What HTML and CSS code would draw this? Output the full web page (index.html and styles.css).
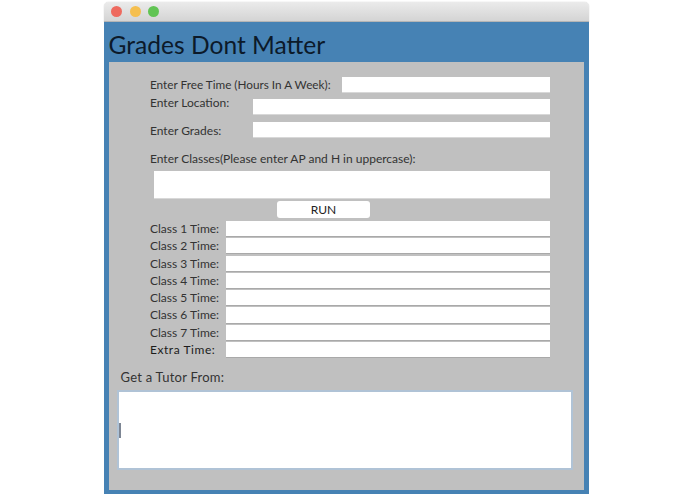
FILE: index.html
```html
<!DOCTYPE html>
<html>
    <head>
        <meta charset="UTF-8">
        <title>Grades Dont Matter</title>
        <link rel="stylesheet" href="styles.css">
    </head>
    <body>
        <div class="gdm-window">
            <div class="gdm-titlebar">
                <span class="gdm-light is-close"></span>
                <span class="gdm-light is-min"></span>
                <span class="gdm-light is-max"></span>
            </div>
            <div class="gdm-main">
                <h1 class="gdm-title">Grades Dont Matter</h1>
                <div class="gdm-panel">
                    <div class="gdm-row gdm-free">
                        <label>Enter Free Time (Hours In A Week):</label>
                        <div class="gdm-field"></div>
                    </div>
                    <div class="gdm-row gdm-location">
                        <label>Enter Location:</label>
                        <div class="gdm-field"></div>
                    </div>
                    <div class="gdm-row gdm-grades">
                        <label>Enter Grades:</label>
                        <div class="gdm-field"></div>
                    </div>
                    <div class="gdm-classes-label">Enter Classes(Please enter AP and H in uppercase):</div>
                    <div class="gdm-classes-field"></div>
                    <div class="gdm-run">RUN</div>
                    <div class="gdm-times">
                        <div class="gdm-time"><label>Class 1 Time:</label><div class="gdm-field"></div></div>
                        <div class="gdm-time"><label>Class 2 Time:</label><div class="gdm-field"></div></div>
                        <div class="gdm-time"><label>Class 3 Time:</label><div class="gdm-field"></div></div>
                        <div class="gdm-time"><label>Class 4 Time:</label><div class="gdm-field"></div></div>
                        <div class="gdm-time"><label>Class 5 Time:</label><div class="gdm-field"></div></div>
                        <div class="gdm-time"><label>Class 6 Time:</label><div class="gdm-field"></div></div>
                        <div class="gdm-time"><label>Class 7 Time:</label><div class="gdm-field"></div></div>
                        <div class="gdm-time is-extra"><label>Extra Time:</label><div class="gdm-field"></div></div>
                    </div>
                    <div class="gdm-tutor-label">Get a Tutor From:</div>
                    <div class="gdm-tutor-field"><span class="gdm-caret"></span></div>
                </div>
            </div>
        </div>
    </body>
</html>
```

FILE: styles.css
```css
* {
    padding: 0;
    margin: 0;
    box-sizing: border-box;
}

html, body {
    height: 100%;
    width: 100%;
    background-color: #fff;
    overflow: hidden;
}

body {
    font-family: "Lato", "Liberation Sans", sans-serif;
    color: #333;
}

.gdm-window {
    margin: 2px 0 0 104px;
    width: 484.5px;
    height: 492px;
    display: flex;
    flex-direction: column;
}

.gdm-titlebar {
    height: 20px;
    display: flex;
    align-items: center;
    gap: 7.5px;
    padding: 0 0 0 7px;
    background: linear-gradient(#ebebeb, #d4d4d4);
    border-radius: 5px 5px 0 0;
    border-bottom: 1px solid #b5b5b5;
    box-shadow: 0 0 1px #aaa;
}

.gdm-light {
    width: 11px;
    height: 11px;
    border-radius: 50%;
}

.is-close { background-color: #ee6a5f; }
.is-min { background-color: #f5bf4f; }
.is-max { background-color: #61c454; }

.gdm-main {
    flex: 1;
    background-color: #4682b4;
    padding: 0 4.5px 4px 4.5px;
    display: flex;
    flex-direction: column;
}

.gdm-title {
    height: 40px;
    font-size: 24.6px;
    font-weight: 400;
    line-height: 45px;
    color: #0c1a2a;
}

.gdm-panel {
    flex: 1;
    background-color: #c0c0c0;
    padding-top: 15px;
    font-size: 12px;
}

.gdm-field {
    background-color: #fff;
    border-bottom: 1px solid #d8d8d8;
}

.gdm-row {
    display: flex;
    padding: 0 34.5px 0 41.5px;
    height: 16px;
    line-height: 16px;
}

.gdm-row .gdm-field {
    flex: 1;
}

.gdm-free label {
    width: 192px;
    font-size: 11.75px;
}

.gdm-location {
    margin-top: 6px;
}

.gdm-location label,
.gdm-grades label {
    width: 103px;
}

.gdm-location label {
    margin-top: -4px;
}

.gdm-grades {
    margin-top: 7px;
}

.gdm-grades label {
    margin-top: 1px;
}

.gdm-classes-label {
    margin: 13px 0 0 41.5px;
    height: 20px;
    line-height: 16px;
}

.gdm-classes-field {
    margin: 0 34.5px 0 45px;
    height: 28px;
    background-color: #fff;
    border-bottom: 1px solid #d8d8d8;
}

.gdm-run {
    margin: 2px 0 3px 168.5px;
    width: 93px;
    height: 17px;
    background-color: #fff;
    border-radius: 3px;
    text-align: center;
    line-height: 17px;
    color: #222;
}

.gdm-times {
    display: flex;
    flex-direction: column;
    gap: 1.1px;
    padding: 0 34.5px 0 41.5px;
}

.gdm-time {
    display: flex;
    height: 16.2px;
    line-height: 16px;
}

.gdm-time label {
    width: 76px;
    flex-shrink: 0;
}

.gdm-time .gdm-field {
    flex: 1;
    border-bottom: 1px solid #a9a9a9;
}

.is-extra label {
    color: #1c1c1c;
    letter-spacing: 0.55px;
}

.gdm-tutor-label {
    margin: 11px 0 0 12px;
    height: 21px;
    line-height: 16px;
    font-size: 13px;
    letter-spacing: 0.25px;
}

.gdm-tutor-field {
    margin: 0 11px 0 8px;
    height: 80px;
    background-color: #fff;
    border: 2px solid #b0c3d6;
    display: flex;
    align-items: center;
}

.gdm-caret {
    width: 2px;
    height: 15px;
    background-color: #7d8694;
}
```
